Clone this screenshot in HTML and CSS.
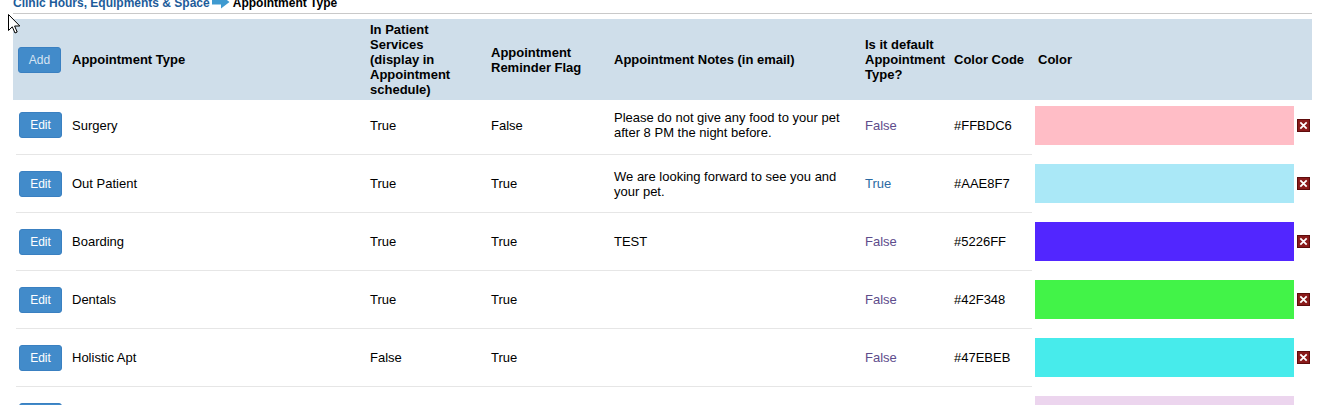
FILE: index.html
```html
<!DOCTYPE html>
<html lang="en">
<head>
<meta charset="utf-8">
<title>Appointment Type</title>
<link rel="stylesheet" href="styles.css">
</head>
<body>
<div class="page">
  <div class="crumbs">
    <a class="crumb-link" href="#">Clinic Hours, Equipments &amp; Space</a><svg class="crumb-arrow" viewBox="0 0 18 14" aria-hidden="true"><path d="M0 4.5 H9 V0.5 L17.5 7 L9 13.5 V9.5 H0 Z" fill="#3f9ad0"/></svg><span class="crumb-current">Appointment Type</span>
  </div>

  <table class="grid">
    <colgroup>
      <col class="w-btn"><col class="w-type"><col class="w-inp"><col class="w-rem"><col class="w-notes"><col class="w-def"><col class="w-code"><col class="w-color"><col class="w-del">
    </colgroup>
    <thead>
      <tr>
        <th class="c-btn"><button class="btn btn-add" type="button">Add</button></th>
        <th>Appointment Type</th>
        <th class="c-inp">In Patient Services (display in Appointment schedule)</th>
        <th>Appointment Reminder Flag</th>
        <th>Appointment Notes (in email)</th>
        <th>Is it default Appointment Type?</th>
        <th>Color Code</th>
        <th class="c-colorhead">Color</th>
        <th class="c-del"></th>
      </tr>
    </thead>
    <tbody>
      <tr class="first">
        <td class="c-btn"><button class="btn" type="button">Edit</button></td>
        <td>Surgery</td>
        <td>True</td>
        <td>False</td>
        <td>Please do not give any food to your pet after 8 PM the night before.</td>
        <td><a class="flag flag-false" href="#">False</a></td>
        <td>#FFBDC6</td>
        <td class="c-swatch"><div class="swatch" style="background:#FFBDC6"></div></td>
        <td class="c-del"><svg class="del" viewBox="0 0 13 13" aria-hidden="true"><rect x="0" y="0" width="13" height="13" fill="#5e0c0c"/><rect x="1" y="1" width="11" height="11" fill="#8a1a1a"/><path d="M3.3 3.3 L9.7 9.7 M9.7 3.3 L3.3 9.7" stroke="#fff" stroke-width="1.8"/></svg></td>
      </tr>
      <tr>
        <td class="c-btn"><button class="btn" type="button">Edit</button></td>
        <td>Out Patient</td>
        <td>True</td>
        <td>True</td>
        <td>We are looking forward to see you and your pet.</td>
        <td><a class="flag flag-true" href="#">True</a></td>
        <td>#AAE8F7</td>
        <td class="c-swatch"><div class="swatch" style="background:#AAE8F7"></div></td>
        <td class="c-del"><svg class="del" viewBox="0 0 13 13" aria-hidden="true"><rect x="0" y="0" width="13" height="13" fill="#5e0c0c"/><rect x="1" y="1" width="11" height="11" fill="#8a1a1a"/><path d="M3.3 3.3 L9.7 9.7 M9.7 3.3 L3.3 9.7" stroke="#fff" stroke-width="1.8"/></svg></td>
      </tr>
      <tr>
        <td class="c-btn"><button class="btn" type="button">Edit</button></td>
        <td>Boarding</td>
        <td>True</td>
        <td>True</td>
        <td>TEST</td>
        <td><a class="flag flag-false" href="#">False</a></td>
        <td>#5226FF</td>
        <td class="c-swatch"><div class="swatch" style="background:#5226FF"></div></td>
        <td class="c-del"><svg class="del" viewBox="0 0 13 13" aria-hidden="true"><rect x="0" y="0" width="13" height="13" fill="#5e0c0c"/><rect x="1" y="1" width="11" height="11" fill="#8a1a1a"/><path d="M3.3 3.3 L9.7 9.7 M9.7 3.3 L3.3 9.7" stroke="#fff" stroke-width="1.8"/></svg></td>
      </tr>
      <tr>
        <td class="c-btn"><button class="btn" type="button">Edit</button></td>
        <td>Dentals</td>
        <td>True</td>
        <td>True</td>
        <td></td>
        <td><a class="flag flag-false" href="#">False</a></td>
        <td>#42F348</td>
        <td class="c-swatch"><div class="swatch" style="background:#42F348"></div></td>
        <td class="c-del"><svg class="del" viewBox="0 0 13 13" aria-hidden="true"><rect x="0" y="0" width="13" height="13" fill="#5e0c0c"/><rect x="1" y="1" width="11" height="11" fill="#8a1a1a"/><path d="M3.3 3.3 L9.7 9.7 M9.7 3.3 L3.3 9.7" stroke="#fff" stroke-width="1.8"/></svg></td>
      </tr>
      <tr>
        <td class="c-btn"><button class="btn" type="button">Edit</button></td>
        <td>Holistic Apt</td>
        <td>False</td>
        <td>True</td>
        <td></td>
        <td><a class="flag flag-false" href="#">False</a></td>
        <td>#47EBEB</td>
        <td class="c-swatch"><div class="swatch" style="background:#47EBEB"></div></td>
        <td class="c-del"><svg class="del" viewBox="0 0 13 13" aria-hidden="true"><rect x="0" y="0" width="13" height="13" fill="#5e0c0c"/><rect x="1" y="1" width="11" height="11" fill="#8a1a1a"/><path d="M3.3 3.3 L9.7 9.7 M9.7 3.3 L3.3 9.7" stroke="#fff" stroke-width="1.8"/></svg></td>
      </tr>
      <tr>
        <td class="c-btn"><button class="btn" type="button">Edit</button></td>
        <td></td>
        <td></td>
        <td></td>
        <td></td>
        <td></td>
        <td></td>
        <td class="c-swatch"><div class="swatch" style="background:#ECD5EE"></div></td>
        <td class="c-del"></td>
      </tr>
    </tbody>
  </table>
</div>
<svg class="cursor" viewBox="0 0 13 20" aria-hidden="true"><path d="M0.5 0.5 L0.5 16.5 L4.3 12.8 L7 19 L9.2 18 L6.6 12 L11.8 12 Z" fill="#fff" stroke="#000" stroke-width="1" stroke-linejoin="miter"/></svg>
</body>
</html>
```

FILE: styles.css
```css
html {
  overflow: hidden;
}

body {
  margin: 0;
  background: #fff;
  color: #000;
  font-family: "Liberation Sans", Arial, sans-serif;
}

.page {
  padding: 0 9px 0 13px;
}

/* breadcrumb */
.crumbs {
  width: 1299px;
  margin-top: -5px;
  padding-bottom: 2px;
  border-bottom: 1px solid #c9c9c9;
  font-size: 12px;
  font-weight: bold;
  line-height: 15px;
  white-space: nowrap;
}

.crumb-link {
  color: #1d5c9a;
  text-decoration: none;
}

.crumb-arrow {
  width: 18px;
  height: 14px;
  margin: 0 3px 0 2px;
  vertical-align: -2px;
}

.crumb-current {
  color: #000;
}

/* table */
.grid {
  width: 1299px;
  margin-top: 5px;
  border-collapse: separate;
  border-spacing: 0;
  table-layout: fixed;
  font-size: 13px;
  line-height: 15px;
}

.w-btn { width: 54px; }
.w-type { width: 298px; }
.w-inp { width: 121px; }
.w-rem { width: 123px; }
.w-notes { width: 251px; }
.w-def { width: 89px; }
.w-code { width: 83px; }
.w-color { width: 264px; }
.w-del { width: 16px; }

.grid thead tr {
  height: 81px;
  background: #cfdeea;
}

.grid th {
  padding: 0 5px;
  text-align: left;
  vertical-align: middle;
  font-weight: bold;
  line-height: 15px;
}

.grid th.c-inp {
  padding-right: 20px;
}

.grid th.c-colorhead {
  padding-left: 6px;
}

.grid th.c-del {
  padding: 0;
}

.grid td {
  padding: 0 5px;
  vertical-align: middle;
  border-top: 1px solid #e6e6e6;
}

.grid tbody tr {
  height: 58px;
}

.grid tbody tr.first {
  height: 54px;
}

.grid tbody tr.first td {
  border-top: 0;
  padding-bottom: 4px;
}

.grid td.c-btn {
  padding-left: 6px;
  border-top-color: transparent;
  background-image: linear-gradient(#e6e6e6, #e6e6e6);
  background-origin: border-box;
  background-repeat: no-repeat;
  background-position: 3px 0;
  background-size: calc(100% - 3px) 1px;
}

.grid tbody tr.first td.c-btn {
  background-image: none;
}

.grid td.c-swatch {
  padding-left: 3px;
  padding-right: 2px;
  border-top-color: transparent;
}

.grid td.c-del {
  padding: 0 0 0 1px;
  border-top-color: transparent;
}

.grid th.c-btn {
  padding-left: 5px;
}

/* buttons */
.btn {
  display: block;
  box-sizing: border-box;
  width: 43px;
  height: 26px;
  padding: 0;
  border: 1px solid #3a80c1;
  border-radius: 3px;
  background: #428bca;
  color: #fff;
  font-family: "Liberation Sans", Arial, sans-serif;
  font-size: 12px;
  line-height: 24px;
  text-align: center;
}

.btn-add {
  color: #d6e4f2;
}

.flag {
  text-decoration: none;
}

.flag-false {
  color: #5e4c8c;
}

.flag-true {
  color: #2b6aa3;
}

.swatch {
  height: 39px;
}

.del {
  display: block;
  width: 13px;
  height: 13px;
}

.cursor {
  position: absolute;
  left: 8px;
  top: 14px;
  width: 13px;
  height: 20px;
}
```
